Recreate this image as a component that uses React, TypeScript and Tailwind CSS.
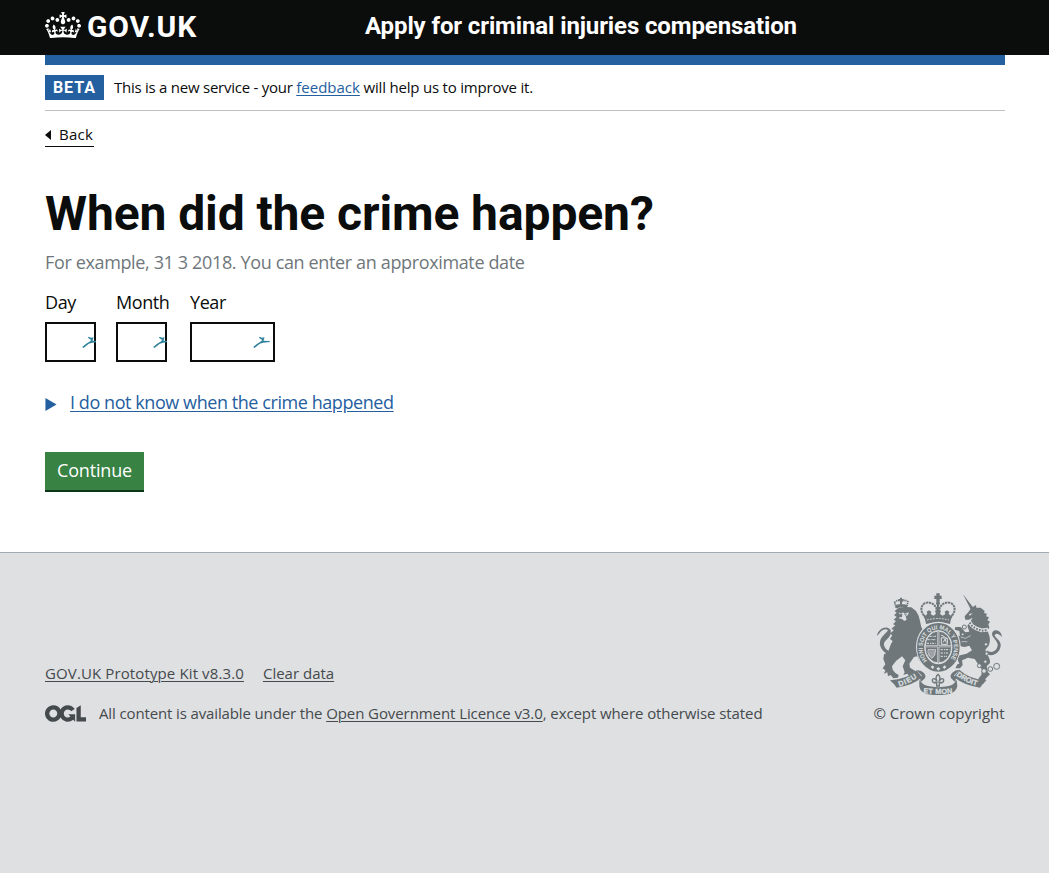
import type { ReactNode } from "react";

function Crown() {
  return (
    <svg viewBox="0 0 132 97" className="mb-[2px] h-[26.5px] w-9 shrink-0 fill-current" aria-hidden="true">
      <path
        fillRule="evenodd"
        d="M25 30.2c3.5 1.5 7.7-.2 9.1-3.7 1.5-3.6-.2-7.8-3.9-9.2-3.6-1.4-7.6.3-9.1 3.9-1.4 3.5.3 7.5 3.9 9zM9 39.5c3.6 1.5 7.8-.2 9.2-3.7 1.5-3.6-.2-7.8-3.9-9.1-3.6-1.5-7.6.2-9.1 3.8-1.4 3.5.3 7.5 3.8 9zM4.4 57.2c3.5 1.5 7.7-.2 9.1-3.8 1.5-3.6-.2-7.7-3.9-9.1-3.5-1.5-7.6.3-9.1 3.8-1.4 3.5.3 7.6 3.9 9.1zm38.3-21.4c3.5 1.5 7.7-.2 9.1-3.8 1.5-3.6-.2-7.7-3.9-9.1-3.6-1.5-7.6.3-9.1 3.8-1.3 3.6.4 7.7 3.9 9.1zm64.4-5.6c-3.6 1.5-7.8-.2-9.1-3.7-1.5-3.6.2-7.8 3.8-9.2 3.6-1.4 7.7.3 9.2 3.9 1.3 3.5-.4 7.5-3.9 9zm15.9 9.3c-3.6 1.5-7.7-.2-9.1-3.7-1.5-3.6.2-7.8 3.7-9.1 3.6-1.5 7.7.2 9.2 3.8 1.5 3.5-.3 7.5-3.8 9zm4.7 17.7c-3.6 1.5-7.8-.2-9.2-3.8-1.5-3.6.2-7.7 3.9-9.1 3.6-1.5 7.7.3 9.2 3.8 1.3 3.5-.4 7.6-3.9 9.1zM89.3 35.8c-3.6 1.5-7.8-.2-9.2-3.8-1.4-3.6.2-7.7 3.9-9.1 3.6-1.5 7.7.3 9.2 3.8 1.4 3.6-.3 7.7-3.9 9.1zM69.7 17.7l8.9 4.7V9.3l-8.9 2.8c-.2-.3-.5-.6-.9-.9L72.4 0H59.6l3.5 11.2c-.3.3-.6.5-.9.9l-8.8-2.8v13.1l8.8-4.7c.3.3.6.7.9.9l-5 15.4v.1c-.2.8-.4 1.6-.4 2.4 0 4.1 3.1 7.5 7 8.1h.2c.3 0 .7.1 1 .1.4 0 .7 0 1-.1h.2c4-.6 7.1-4.1 7.1-8.1 0-.8-.1-1.7-.4-2.4V34l-5.1-15.4c.4-.2.7-.6 1-.9zM66 92.8c16.9 0 32.8 1.1 47.1 3.2 4-16.9 8.9-26.7 14-33.5l-9.6-3.4c1 4.9 1.1 7.2 0 10.2-1.5-1.4-3-4.3-4.2-8.7L108.6 76c2.8-2 5-3.2 7.5-3.3-4.4 9.4-10 11.9-13.6 11.2-4.3-.8-6.3-4.6-5.6-7.9 1-4.7 5.7-5.9 8-.5 4.3-8.7-3-11.4-7.6-8.8 7.1-7.2 7.9-13.5 2.1-21.1-8 6.1-8.1 12.3-4.5 20.8-4.7-5.4-12.1-2.5-9.5 6.2 3.4-5.2 7.9-2 7.2 3.1-.6 4.3-6.4 7.8-13.5 7.2-10.3-.9-10.9-8-11.2-13.8 2.5-.5 7.1 1.8 11 7.3L80.2 60c-4.1 4.4-8 5.3-12.3 5.4 1.4-4.4 8-11.6 8-11.6H55.5s6.4 7.2 7.9 11.6c-4.2-.1-8-1-12.3-5.4l1.4 16.4c3.9-5.5 8.5-7.7 10.9-7.3-.3 5.8-.9 12.8-11.1 13.8-7.2.6-12.9-2.9-13.5-7.2-.7-5 3.8-8.3 7.1-3.1 2.7-8.7-4.6-11.6-9.4-6.2 3.7-8.5 3.6-14.7-4.6-20.8-5.8 7.6-5 13.9 2.2 21.1-4.7-2.6-11.9.1-7.7 8.8 2.3-5.5 7.1-4.2 8.1.5.7 3.3-1.3 7.1-5.7 7.9-3.5.7-9-1.8-13.5-11.2 2.5.1 4.7 1.3 7.5 3.3l-4.7-15.4c-1.2 4.4-2.7 7.2-4.3 8.7-1.1-3-.9-5.3 0-10.2l-9.5 3.4c5 6.9 9.9 16.7 14 33.5 14.8-2.1 30.8-3.2 47.7-3.2z"
      />
    </svg>
  );
}

function OglLogo() {
  return (
    <svg viewBox="0 0 483.2 195.7" className="h-[17px] w-[41px] shrink-0 fill-current" aria-hidden="true">
      <path d="M421.5 142.8V.1l-50.7 32.3v161.1h112.4v-50.7zm-122.3-9.6A47.12 47.12 0 0 1 221 97.8c0-26 21.1-47.1 47.1-47.1 16.7 0 31.4 8.7 39.7 21.8l42.7-27.2A97.63 97.63 0 0 0 268.1 0c-36.5 0-68.3 20.1-85.1 49.7A98 98 0 0 0 97.8 0C43.9 0 0 43.9 0 97.8s43.9 97.8 97.8 97.8c36.5 0 68.3-20.1 85.1-49.7a97.76 97.76 0 0 0 149.6 25.4l19.4 22.2h3v-87.8h-80l24.3 27.5zM97.8 145c-26 0-47.1-21.1-47.1-47.1s21.1-47.1 47.1-47.1 47.1 21.1 47.1 47.1S123.8 145 97.8 145" />
    </svg>
  );
}

function RoyalArms() {
  const bg = "#dee0e2";
  const ink = "#6f777b";
  return (
    <svg viewBox="21 24 375 306" className="h-[102px] w-[125px]" fill={ink} stroke="none" aria-hidden="true">
      {/* lion */}
      <path d="M84 70 L74 78 L80 84 L72 90 L80 96 L71 104 L78 108 L69 118 L76 121 L64 132 L72 135 L60 146 L67 151 L60 162 L68 168 C60 180 58 192 54 202 L42 208 L40 222 L46 238 L38 250 L46 256 L42 266 L52 262 L54 274 L62 270 L70 280 L84 278 L86 270 L76 264 L68 254 L66 244 L78 228 L96 214 L106 226 L98 244 L104 262 L100 270 L112 266 L118 274 L126 266 L136 268 L136 258 L120 248 L118 236 L132 216 L142 214 L148 226 L160 236 L154 208 L144 182 L150 158 L164 146 L154 126 L150 108 L146 92 L138 78 L124 67 L104 66 Z" />
      <path d="M58 208 C42 204 27 188 30 170 C32 156 48 146 54 136 C44 128 32 138 26 148 L21 152 C24 136 38 126 52 128 C68 132 64 150 54 160 C46 168 38 174 44 186 C48 194 54 198 62 200 Z" />
      <path d="M86 82 L94 86 L99 82 L104 86 L116 82 L114 90 L107 94 L110 104 L103 108 L96 102 L86 100 L92 94 Z" fill={bg} />
      <path d="M88 88 L97 87 L96 97 L90 96 Z M102 89 L111 86 L108 92 Z" />
      <path d="M74 52 L78 68 Q94 62 110 68 L114 50 Q104 42 94 50 Q84 42 74 52 Z" fill="none" stroke={ink} strokeWidth="5" strokeDasharray="4 2" />
      <path d="M77 60 Q94 54 112 60 L110 70 Q94 64 78 70 Z M90 38 h6 v4 h5 v5 h-5 v14 h-6 v-14 h-5 v-5 h5 Z" />

      {/* unicorn */}
      <path d="M279 28 L309 67 L302 73 Z" />
      <path d="M304 68 L312 64 L318 60 L319 68 L332 68 L344 78 L342 84 L351 86 L348 94 L357 97 L352 106 L360 110 L355 118 L358 128 L352 136 C358 152 364 164 356 182 L346 194 C350 208 362 220 360 234 L350 244 L354 262 L360 268 L348 280 L340 296 L322 294 L326 280 L334 270 L336 254 L326 240 L314 222 L294 218 L276 226 L278 240 L270 250 L256 250 L262 238 L268 236 L262 222 L264 212 L290 206 L306 196 L298 182 L284 186 L272 184 L262 176 L254 158 L260 150 L270 154 L268 138 L254 134 L256 126 L272 126 L286 142 L298 140 L292 122 L302 108 L308 98 L296 104 L286 104 L284 94 L296 80 Z" />
      <path d="M350 196 C366 208 384 196 383 178 C382 166 366 158 366 146 C368 132 388 132 394 148 L396 156 C388 146 376 142 374 152 C380 162 394 168 392 184 C388 206 368 216 352 208 Z" />
      <path d="M298 110 L306 122 L318 130 L334 136 L354 134" fill="none" stroke={bg} strokeWidth="11" />
      <path d="M299 113 L307 124 L319 131 L335 137 L352 135" fill="none" stroke={ink} strokeWidth="6" strokeDasharray="5 4" />
      <path d="M296 88 L308 84 L300 92 Z" fill={bg} />
      <path d="M302 152 l-16 8 l-14 -4 M274 170 l18 0" fill="none" stroke={bg} strokeWidth="2" />
      <g fill={bg} stroke={ink} strokeWidth="3">
        <circle cx="283" cy="126" r="6" />
        <circle cx="278" cy="148" r="4" />
        <circle cx="348" cy="178" r="5" />
        <circle cx="350" cy="206" r="5" />
        <circle cx="346" cy="230" r="5" />
        <circle cx="328" cy="242" r="6" />
        <circle cx="342" cy="258" r="7" />
        <circle cx="361" cy="252" r="7" />
        <circle cx="380" cy="244" r="9" />
      </g>

      {/* crown */}
      <path d="M199 25 h10 v7 h6 v10 h-6 v8 h-10 v-8 h-6 v-10 h6 Z" />
      <circle cx="204" cy="55" r="6" />
      <path d="M168 98 C142 76 156 46 182 54 C196 58 201 70 202 84 M240 98 C266 76 252 46 226 54 C212 58 207 70 206 84" fill="none" stroke={ink} strokeWidth="6" strokeDasharray="7 2" />
      <path d="M201 60 h6 v30 h-6 Z M158 86 L167 92 L172 86 L170 80 L177 76 L184 80 L182 88 L191 92 L198 86 L195 78 L204 70 L213 78 L210 86 L217 92 L226 88 L224 80 L231 76 L238 80 L236 86 L241 92 L250 86 L241 108 Q204 98 167 108 Z" />
      <path d="M166 106 Q204 96 242 106 L240 117 Q204 106 168 117 Z" />
      <path d="M171 105 Q204 96 237 105" fill="none" stroke={bg} strokeWidth="3" strokeDasharray="5 4" />

      {/* garter */}
      <ellipse cx="205" cy="186" rx="67" ry="76" fill={bg} />
      <ellipse cx="205" cy="187" rx="53" ry="62" fill="none" stroke={ink} strokeWidth="22" />
      <defs>
        <path id="garter" d="M172 227 A47 55 0 1 1 238 227" />
        <path id="left-ribbon" d="M88 304 Q118 296 148 273" />
        <path id="mid-ribbon" d="M160 324 Q204 330 250 324" />
        <path id="right-ribbon" d="M258 271 Q290 296 324 303" />
      </defs>
      <text fill={bg} fontSize="18" fontWeight="700" fontFamily="Liberation Sans, sans-serif">
        <textPath href="#garter" textLength="238" lengthAdjust="spacingAndGlyphs">
          HONI SOIT QUI MAL Y PENSE
        </textPath>
      </text>
      <ellipse cx="205" cy="186" rx="40" ry="48" />
      <g fill="none" stroke={bg}>
        <path d="M205 138 V235 M164 184 H246" strokeWidth="6" />
        <ellipse cx="205" cy="186" rx="40" ry="48" strokeWidth="3" />
        <path d="M178 154 h20 M172 164 h26 M170 175 h27 M212 194 h26 M212 204 h24 M212 214 h19" strokeWidth="3" strokeDasharray="7 3 3 2" />
        <path d="M213 150 q12 4 17 12 M214 178 V158 L232 160 V178 Z M220 172 l5 -10 l4 10" strokeWidth="3" />
        <path d="M174 194 q-1 18 12 26 q11 -8 11 -26 Z M180 196 v18 M186 196 v22 M192 196 v16" strokeWidth="2.5" />
      </g>
      <path d="M205 138 V235 M166 184 H244" stroke={ink} strokeWidth="2" />
      <path d="M182 246 l6 -5 l5 6 l-5 5 Z M199 251 l6 -5 l6 5 l-6 6 Z M218 247 l6 -6 l5 5 l-6 6 Z" fill={bg} />

      {/* ribbon */}
      <path d="M60 286 Q110 284 140 256 L156 277 Q128 302 80 308 Q74 298 60 286 Z" />
      <path d="M350 286 Q300 284 268 254 L252 277 Q284 302 330 308 Q336 298 350 286 Z" />
      <path d="M140 256 Q152 254 162 264 Q172 276 160 284 L152 292 L150 278 L156 272 Z M268 254 Q256 254 246 264 Q236 276 248 284 L256 292 L258 278 L252 272 Z" />
      <path d="M148 284 Q158 300 174 303 Q204 310 236 303 Q252 300 260 284 L262 304 Q258 322 238 327 Q204 334 168 327 Q150 320 148 304 Z" />
      <g fill={bg} stroke={bg} strokeWidth="0.6" fontSize="22" fontWeight="700" fontFamily="Liberation Sans, sans-serif">
        <text>
          <textPath href="#left-ribbon" textLength="60">DIEU</textPath>
        </text>
        <text>
          <textPath href="#mid-ribbon" textLength="88">ET MON</textPath>
        </text>
        <text>
          <textPath href="#right-ribbon" textLength="70" lengthAdjust="spacingAndGlyphs">
            DROIT
          </textPath>
        </text>
      </g>
      <path d="M204 268 Q214 278 207 288 Q218 276 221 284 Q222 292 214 294 L208 293 L208 303 L200 303 L200 293 L194 294 Q186 292 187 284 Q190 276 201 288 Q194 278 204 268 Z" fill={bg} stroke={ink} strokeWidth="4" />
      <path d="M194 291 h20" stroke={ink} strokeWidth="3" />
    </svg>
  );
}

function DateField({ label, name, year }: { label: string; name: string; year?: boolean }) {
  return (
    <label className={year ? "flex w-[85px] flex-col" : "flex w-[51px] flex-col"}>
      <span className="h-10 text-[18px] leading-[40px] tracking-[-0.4px] whitespace-nowrap">{label}</span>
      <span className="relative block h-10 overflow-hidden">
        <input
          id={name}
          name={name}
          className="block h-10 w-full border-2 border-[#0b0c0c] bg-white px-1 outline-none"
        />
        <svg
          viewBox="0 0 50 36"
          className={
            year ? "absolute top-[13.5px] left-[63px] h-3 w-[17px]" : "absolute top-[13.5px] left-[37px] h-3 w-[17px]"
          }
          fill="#31839b"
          aria-hidden="true"
        >
          <path d="M0 33 L12 23 L24 16 L27 12 L17 5 L20 2 L26 5 L34 4 L31 14 L50 15 L50 18 L30 20 L20 23 L4 36 Z" />
        </svg>
      </span>
    </label>
  );
}

function FooterLink({ children, className = "" }: { children: ReactNode; className?: string }) {
  return (
    <a href="#" className={`underline decoration-1 underline-offset-2 ${className}`}>
      {children}
    </a>
  );
}

export default function App() {
  return (
    <div className="flex h-[873px] flex-col bg-[#dee0e2] font-['Open_Sans','Noto_Sans',sans-serif] text-[15px] text-[#0b0c0c]">
      <header className="h-[55px] shrink-0 bg-[#0b0c0c] px-[45px] text-white">
        <div className="flex h-[52px] items-center font-['Roboto',sans-serif] font-bold">
          <a href="#" className="flex w-[320px] items-center gap-[6px]">
            <Crown />
            <span className="pt-px text-[30px] leading-none tracking-[0.9px]">GOV.UK</span>
          </a>
          <a href="#" className="text-[24px] leading-none tracking-[-0.12px]">
            Apply for criminal injuries compensation
          </a>
        </div>
      </header>

      <main className="h-[497px] shrink-0 bg-white px-[45px]">
        <div className="h-[10px] w-[960px] bg-[#2460a0]" />
        <div className="flex h-[46px] w-[960px] items-center gap-[10px] border-b border-[#bfc1c3]">
          <strong className="flex h-[25px] w-[59px] items-center justify-center bg-[#2460a0] font-['Roboto',sans-serif] text-[16px] leading-none font-bold tracking-[1px] text-white">
            BETA
          </strong>
          <p className="tracking-[-0.25px] whitespace-pre">
            This is a new service - your{" "}
            <a href="#" className="tracking-normal text-[#2460a0] underline underline-offset-2">
              feedback
            </a>{" "}
            <span className="tracking-[-0.2px]">will help us to improve it.</span>
          </p>
        </div>

        <a
          href="#"
          className="mt-[14px] flex h-[22px] w-[49px] items-center gap-[8px] border-b border-[#0b0c0c] pb-[2px] leading-none tracking-[0.3px]"
        >
          <svg viewBox="0 0 6 10" className="h-[10px] w-[6px] fill-current" aria-hidden="true">
            <path d="M0 5 6 0V10Z" />
          </svg>
          Back
        </a>

        <h1 className="mt-[42px] font-['Roboto',sans-serif] text-[48px] leading-[50px] font-bold tracking-[-0.1px]">
          When did the crime happen?
        </h1>
        <p className="mt-[11px] text-[18px] leading-[25px] tracking-[-0.36px] text-[#6f777b]">
          For example, 31 3 2018. You can enter an approximate date
        </p>
        <div className="mt-[7px] flex">
          <div className="w-[71px]">
            <DateField label="Day" name="day" />
          </div>
          <div className="w-[74px]">
            <DateField label="Month" name="month" />
          </div>
          <DateField label="Year" name="year" year />
        </div>

        <div className="mt-[28px] flex h-[26px] items-center gap-[13px] text-[#2460a0]">
          <svg viewBox="0 0 12 14" className="mt-[3px] h-[13px] w-3 fill-current" aria-hidden="true">
            <path d="M0 0 12 7 0 14Z" />
          </svg>
          <a href="#" className="mb-[2px] text-[18px] leading-[25px] tracking-[-0.43px] underline underline-offset-2">
            I do not know when the crime happened
          </a>
        </div>

        <button
          type="button"
          className="mt-[36px] flex h-10 w-[99px] items-center justify-center border-b-2 border-[#0d3519] bg-[#388243] pb-[2px] text-[18px] leading-none tracking-[-0.17px] text-white"
        >
          Continue
        </button>
      </main>

      <footer className="flex grow items-start border-t border-[#a1acb2] px-[45px] text-[#454a4d]">
        <div className="flex w-[829px] flex-col pt-[109px]">
          <div className="flex h-[22px] items-center gap-[19px]">
            <FooterLink className="tracking-[0.12px]">GOV.UK Prototype Kit v8.3.0</FooterLink>
            <FooterLink>Clear data</FooterLink>
          </div>
          <div className="mt-[18px] flex h-[22px] items-center gap-[13px]">
            <OglLogo />
            <p className="tracking-[-0.13px]">
              All content is available under the{" "}
              <FooterLink className="tracking-[-0.08px]">Open Government Licence v3.0</FooterLink>
              <span className="tracking-[-0.09px]">, except where otherwise stated</span>
            </p>
          </div>
        </div>
        <div className="flex w-[130px] flex-col items-center pt-[40px]">
          <RoyalArms />
          <a href="#" className="mt-[7px] leading-[22px] whitespace-nowrap">
            © Crown copyright
          </a>
        </div>
      </footer>
    </div>
  );
}
